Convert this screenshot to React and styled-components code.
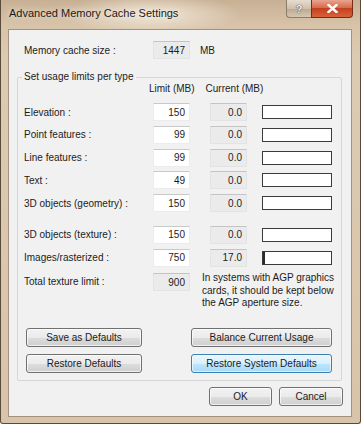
import React from 'react';
import styled, { createGlobalStyle } from 'styled-components';

const GlobalStyle = createGlobalStyle`
    html, body {
        margin: 0;
        padding: 0;
        background: #ffffff;
    }
    body {
        font-family: "Liberation Sans", Arial, sans-serif;
        font-size: 10px;
        color: #1c1c1c;
    }
`;

const limits = [
    { name: 'Elevation :', limit: 150, current: '0.0' },
    { name: 'Point features :', limit: 99, current: '0.0' },
    { name: 'Line features :', limit: 99, current: '0.0' },
    { name: 'Text :', limit: 49, current: '0.0' },
    { name: '3D objects (geometry) :', limit: 150, current: '0.0' },
    { name: '3D objects (texture) :', limit: 150, current: '0.0', spaced: true },
    { name: 'Images/rasterized :', limit: 750, current: '17.0' },
];

const App = () => {
    return (
        <>
            <GlobalStyle />
            <Window>
                <TitleBar>
                    <Title>Advanced Memory Cache Settings</Title>
                    <Captions>
                        <HelpButton>?</HelpButton>
                        <CloseButton>
                            <svg width="11" height="9" viewBox="0 0 11 9">
                                <path d="M1.5 1 L9.5 8 M9.5 1 L1.5 8" stroke="#ffffff" strokeWidth="2.4" strokeLinecap="square" />
                            </svg>
                        </CloseButton>
                    </Captions>
                </TitleBar>
                <Client>
                    <Row>
                        <Label>Memory cache size :</Label>
                        <Field $readonly>1447</Field>
                        <Unit>MB</Unit>
                    </Row>
                    <Group>
                        <Legend>Set usage limits per type</Legend>
                        <Header>
                            <span>Limit (MB)</span>
                            <span>Current (MB)</span>
                        </Header>
                        <Rows>
                            {limits.map((item, i) => (
                                <Row key={i} $spaced={item.spaced}>
                                    <Label>{item.name}</Label>
                                    <Field>{item.limit}</Field>
                                    <CurrentField $readonly>{item.current}</CurrentField>
                                    <Bar>
                                        <BarFill style={{ width: `${(parseFloat(item.current) / item.limit) * 100}%` }} />
                                    </Bar>
                                </Row>
                            ))}
                            <TotalRow>
                                <Label>Total texture limit :</Label>
                                <Field $readonly>900</Field>
                                <Note>
                                    In systems with AGP graphics<br />
                                    cards, it should be kept below<br />
                                    the AGP aperture size.
                                </Note>
                            </TotalRow>
                        </Rows>
                        <ButtonGrid>
                            <Button $w={116}>Save as Defaults</Button>
                            <Button $w={141}>Balance Current Usage</Button>
                            <Button $w={116}>Restore Defaults</Button>
                            <Button $w={141} $hot>Restore System Defaults</Button>
                        </ButtonGrid>
                    </Group>
                    <Footer>
                        <Button $w={63} $h={19}>OK</Button>
                        <Button $w={64} $h={19}>Cancel</Button>
                    </Footer>
                </Client>
            </Window>
        </>
    );
};

const Window = styled.div`
    width: 361px;
    height: 424px;
    box-sizing: border-box;
    display: flex;
    flex-direction: column;
    padding: 0 8px 6px 7px;
    border: 1px solid #5a4a3a;
    border-top: none;
    border-radius: 0 0 3px 3px;
    background:
        radial-gradient(ellipse 90px 20px at 150px 14px, rgba(255, 250, 240, 0.7), rgba(255, 250, 240, 0) 100%),
        linear-gradient(to bottom, #c8b094 0px, #d8c4aa 26px, #dccab3 60px, #d8c4aa 100%);
`;

const TitleBar = styled.div`
    height: 29px;
    flex-shrink: 0;
    display: flex;
    justify-content: space-between;
    align-items: flex-start;
`;

const Title = styled.div`
    padding: 7px 0 0 1px;
    font-size: 11px;
    color: #1a1a1a;
    text-shadow: 0 0 6px rgba(255, 255, 255, 0.9);
`;

const Captions = styled.div`
    display: flex;
    margin-right: -1px;
`;

const HelpButton = styled.div`
    width: 24px;
    height: 17px;
    display: flex;
    align-items: center;
    justify-content: center;
    font-size: 11px;
    font-weight: bold;
    color: #f4f0ea;
    text-shadow: 0 0 1px #4a3c30, 0 0 1px #4a3c30;
    border: 1px solid #8b7b6b;
    border-top: none;
    border-right: none;
    border-radius: 0 0 0 4px;
    background: linear-gradient(to bottom, #e6dccf 0%, #cfc0ad 50%, #bba88f 51%, #d6c6b2 100%);
`;

const CloseButton = styled.div`
    width: 40px;
    height: 17px;
    display: flex;
    align-items: center;
    justify-content: center;
    border: 1px solid #7a2a18;
    border-top: none;
    border-radius: 0 0 4px 0;
    background: linear-gradient(to bottom, #e9a48e 0%, #d76b4d 45%, #c4401f 50%, #d8623c 100%);
`;

const Client = styled.div`
    flex: 1;
    display: flex;
    flex-direction: column;
    background: #f1f1f1;
    border: 1px solid #a3927f;
    padding: 10px 8px 0 15px;
`;

const Row = styled.div`
    display: flex;
    align-items: center;
    height: 20px;
    margin-top: ${p => (p.$spaced ? '9px' : '0')};
`;

const Label = styled.div`
    width: 129px;
    flex-shrink: 0;
    white-space: nowrap;
`;

const Field = styled.div`
    width: 37px;
    height: 18px;
    box-sizing: border-box;
    flex-shrink: 0;
    padding-right: 4px;
    display: flex;
    align-items: center;
    justify-content: flex-end;
    background: ${p => (p.$readonly ? '#ebebeb' : '#ffffff')};
    border: 1px solid ${p => (p.$readonly ? '#e3e3e3' : '#ececec')};
    border-top-color: ${p => (p.$readonly ? '#c4c4c4' : '#c9c9c9')};
`;

const CurrentField = styled(Field)`
    margin-left: 20px;
`;

const Unit = styled.div`
    margin-left: 10px;
`;

const Bar = styled.div`
    width: 71px;
    height: 14px;
    box-sizing: border-box;
    margin-left: 15px;
    background: #ffffff;
    border: 1px solid #3b3b3b;
    display: flex;
`;

const BarFill = styled.div`
    background: #2a2a2a;
`;

const Group = styled.fieldset`
    margin: 11px 1px 0 -7px;
    padding: 0 9px 7px 6px;
    border: 1px solid #d6d6d6;
    border-radius: 2px;
    min-width: 0;
`;

const Legend = styled.legend`
    padding: 0 2px;
    margin-left: -2px;
    line-height: 12px;
`;

const Header = styled.div`
    display: flex;
    padding-left: 125px;
    line-height: 12px;
    gap: 11px;
`;

const Rows = styled.div`
    display: flex;
    flex-direction: column;
    gap: 2.75px;
    margin-top: 7px;
`;

const TotalRow = styled.div`
    display: flex;
    align-items: flex-start;
    margin-top: 3px;
    & > ${Label} {
        line-height: 18px;
    }
`;

const Note = styled.div`
    margin-left: 12px;
    line-height: 12.5px;
    margin-top: -1px;
    white-space: nowrap;
`;

const ButtonGrid = styled.div`
    display: grid;
    grid-template-columns: auto auto;
    justify-content: space-between;
    row-gap: 7px;
    margin-top: 18px;
    padding-left: 2px;
`;

const Button = styled.div`
    width: ${p => p.$w}px;
    height: ${p => p.$h || 19}px;
    box-sizing: border-box;
    display: flex;
    align-items: center;
    justify-content: center;
    font-size: 10px;
    color: #1a1a1a;
    border-radius: 3px;
    border: 1px solid ${p => (p.$hot ? '#3c7fb1' : '#707070')};
    box-shadow: inset 0 0 0 1px ${p => (p.$hot ? 'rgba(255,255,255,0.6)' : 'rgba(255,255,255,0.7)')};
    background: ${p => (p.$hot
        ? 'linear-gradient(to bottom, #eaf6fd 0%, #d9f0fc 50%, #bee6fd 51%, #a7d9f5 100%)'
        : 'linear-gradient(to bottom, #f2f2f2 0%, #ebebeb 50%, #dddddd 51%, #cfcfcf 100%)')};
`;

const Footer = styled.div`
    display: flex;
    justify-content: flex-end;
    gap: 7px;
    margin-top: 6px;
`;

export default App;
